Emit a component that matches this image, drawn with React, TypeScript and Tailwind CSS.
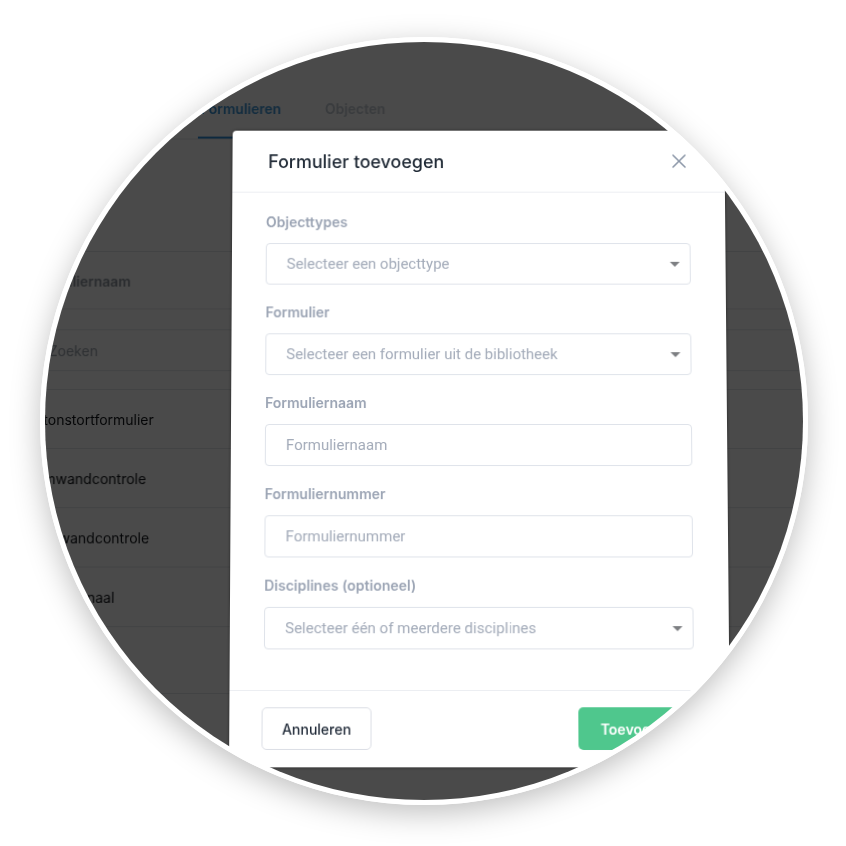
const FIELDS = [
  { label: "Objecttypes", placeholder: "Selecteer een objecttype", select: true },
  { label: "Formulier", placeholder: "Selecteer een formulier uit de bibliotheek", select: true },
  { label: "Formuliernaam", placeholder: "Formuliernaam", select: false },
  { label: "Formuliernummer", placeholder: "Formuliernummer", select: false },
  { label: "Disciplines (optioneel)", placeholder: "Selecteer één of meerdere disciplines", select: true },
];

const ROWS = ["Betonstortformulier", "Damwandcontrole", "Kadewandcontrole", "Weekjournaal"];

function Caret() {
  return (
    <svg width="10" height="5" viewBox="0 0 10 5" className="shrink-0">
      <path d="M0 0h10L5 5z" fill="#7d7f82" />
    </svg>
  );
}

function CloseIcon() {
  return (
    <svg width="14" height="14" viewBox="0 0 14 14">
      <path d="M1 1l12 12M13 1L1 13" stroke="#8c97a8" strokeWidth="1.6" strokeLinecap="round" />
    </svg>
  );
}

function BackgroundPage() {
  return (
    <div className="h-full w-full bg-white font-['Inter',sans-serif] text-[14px]">
      <div className="flex gap-[41px] border-b border-[#e4e6ea] pl-[196px] pt-[96px] font-semibold">
        <div className="border-b-2 border-[#2f8fd8] px-[3px] pb-[18px] leading-[20px] text-[#3a93d6]">
          Formulieren
        </div>
        <div className="pb-[18px] leading-[20px] text-[#c3cad3]">Objecten</div>
      </div>
      <div className="h-[114px] border-b border-[#e4e6ea]" />
      <div className="flex h-[58px] items-center border-b border-[#e4e6ea] pl-[28px] pt-[2px] font-semibold text-[#8d949e]">
        Formuliernaam
      </div>
      <div className="h-[20px]" />
      <div className="flex h-[42px] items-center border-y border-[#e4e6ea] pl-[48px] text-[#9aa1ab]">
        Zoeken
      </div>
      <div className="h-[19px] border-b border-[#e4e6ea]" />
      {ROWS.map((row) => (
        <div key={row} className="flex h-[59px] items-center border-b border-[#e4e6ea] pl-[26px] pt-[1px] text-[#111418]">
          {row}
        </div>
      ))}
      <div className="h-[66px] border-b border-[#e4e6ea]" />
    </div>
  );
}

function Modal() {
  return (
    <div className="absolute left-[231px] top-[128px] w-[496px] rounded-[4px] bg-white font-['Inter',sans-serif] shadow-[0_0_3px_rgba(0,0,0,0.55)]">
      <div className="flex h-[63px] items-center justify-between border-b border-[#eceef2] pl-[36px] pr-[39px]">
        <h2 className="pt-[1px] text-[18px] font-medium text-[#1d2733]">Formulier toevoegen</h2>
        <CloseIcon />
      </div>

      <div className="flex flex-col gap-[18px] pb-[40px] pl-[34px] pr-[35px] pt-[20px]">
        {FIELDS.map((field) => (
          <div key={field.label}>
            <div className="mb-[11px] text-[14px] font-semibold leading-[20px] text-[#9ba4b4]">
              {field.label}
            </div>
            <div className="flex h-[42px] items-center justify-between rounded-[4px] border border-[#dfe3ea] pl-[20px] pr-[10px]">
              <span className="font-['Roboto',sans-serif] text-[15px] text-[#a3abb9]">{field.placeholder}</span>
              {field.select && <Caret />}
            </div>
          </div>
        ))}
      </div>

      <div className="flex items-center justify-between border-t border-[#eceef2] pb-[17px] pl-[32px] pr-[31px] pt-[16px]">
        <button className="h-[42px] w-[109px] rounded-[5px] border border-[#dcdfe6] text-[14px] font-medium text-[#1f2937]">
          Annuleren
        </button>
        <button className="h-[42px] rounded-[5px] bg-[#4fc78d] px-[22px] text-[14px] font-semibold text-white">
          Toevoegen
        </button>
      </div>
    </div>
  );
}

export default function App() {
  return (
    <div className="h-[846px] w-[846px] overflow-hidden bg-white pl-[40px] pt-[37px]">
      <div className="h-[768px] w-[768px] overflow-hidden rounded-full border-[5px] border-white shadow-[0_8px_30px_rgba(0,0,0,0.25)]">
        <div className="relative -ml-[45px] -mt-[42px] h-[846px] w-[846px] [transform:perspective(1000px)_rotateX(1.7deg)]">
          <BackgroundPage />
          <div className="absolute inset-0 bg-black/[0.71]" />
          <Modal />
        </div>
      </div>
    </div>
  );
}
